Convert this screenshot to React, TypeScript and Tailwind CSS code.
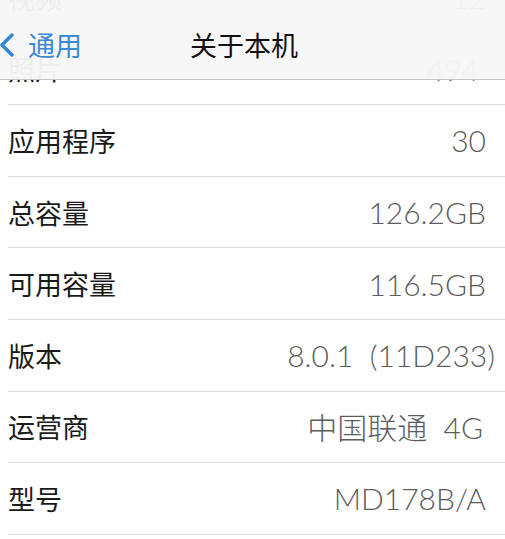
import React from "react";

type Row = { label: string; value: string; pr?: string };

const rows: Row[] = [
  { label: "视频", value: "12" },
  { label: "照片", value: "494", pr: "pr-[26px]" },
  { label: "应用程序", value: "30" },
  { label: "总容量", value: "126.2GB" },
  { label: "可用容量", value: "116.5GB" },
  { label: "版本", value: "8.0.1  (11D233)", pr: "pr-[10px]" },
  { label: "运营商", value: "中国联通  4G", pr: "pr-[22px]" },
  { label: "型号", value: "MD178B/A" },
];

const cjk = { fontFamily: '"Noto Sans CJK SC", "Noto Sans", sans-serif' };
const num = { fontFamily: 'Lato, "Noto Sans CJK SC", sans-serif' };

const App = () => {
  return (
    <div className="relative w-[505px] h-[539px] overflow-hidden bg-white">
      <div className="mt-[-38px]">
        {rows.map((r) => (
          <div
            key={r.label}
            className="h-[71.6px] ml-[8px] flex items-center justify-between border-b border-[#dcdcdc]"
          >
            <span className="text-[27px] text-[#1a1a1a] leading-none" style={cjk}>
              {r.label}
            </span>
            <span
              className={`${r.pr ?? "pr-[19px]"} text-[30px] font-light text-[#5c5c5c] leading-none whitespace-pre`}
              style={num}
            >
              {r.value}
            </span>
          </div>
        ))}
      </div>

      <div className="absolute top-0 left-0 right-0 h-[80px] bg-[#f7f7f7]/[0.96] border-b border-[#c4c4c4] flex items-center pt-[10px]">
        <svg width="18" height="24" viewBox="0 0 18 24" className="ml-[-2px]">
          <path d="M14 2 L4 12 L14 22" fill="none" stroke="#2f86d8" strokeWidth="3.4" strokeLinecap="round" strokeLinejoin="round" />
        </svg>
        <span className="ml-[12px] text-[27px] text-[#3a8ad6] leading-none" style={cjk}>
          通用
        </span>
        <span className="ml-[108px] text-[27px] text-[#111] leading-none" style={cjk}>
          关于本机
        </span>
      </div>
    </div>
  );
};

export default App;
